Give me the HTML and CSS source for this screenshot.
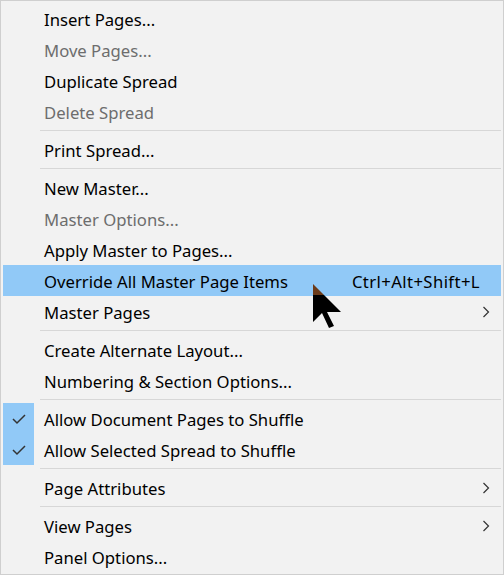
FILE: index.html
```html
<!DOCTYPE html>
<html>
<head>
<meta charset="utf-8">
<link rel="stylesheet" href="styles.css">
</head>
<body>
<div class="menu">
  <div class="item"><span class="check"></span><span class="label">Insert Pages...</span></div>
  <div class="item disabled"><span class="check"></span><span class="label">Move Pages...</span></div>
  <div class="item"><span class="check"></span><span class="label">Duplicate Spread</span></div>
  <div class="item disabled"><span class="check"></span><span class="label">Delete Spread</span></div>
  <div class="sep"></div>
  <div class="item"><span class="check"></span><span class="label">Print Spread...</span></div>
  <div class="sep"></div>
  <div class="item"><span class="check"></span><span class="label">New Master...</span></div>
  <div class="item disabled"><span class="check"></span><span class="label">Master Options...</span></div>
  <div class="item"><span class="check"></span><span class="label">Apply Master to Pages...</span></div>
  <div class="item hover"><span class="check"></span><span class="label">Override All Master Page Items</span><span class="shortcut">Ctrl+Alt+Shift+L</span>
    <svg class="cursor" width="30" height="46" viewBox="0 0 30 46">
      <defs>
        <linearGradient id="cg" x1="0" y1="0" x2="0" y2="46" gradientUnits="userSpaceOnUse">
          <stop offset="0" stop-color="#6b3b1a"/>
          <stop offset="0.25" stop-color="#6b3b1a"/>
          <stop offset="0.25" stop-color="#000"/>
          <stop offset="1" stop-color="#000"/>
        </linearGradient>
      </defs>
      <path d="M0 0 L0 38 L9 29 L16 44 L21 42 L14 28 L28 28 Z" fill="url(#cg)"/>
    </svg>
  </div>
  <div class="item"><span class="check"></span><span class="label">Master Pages</span><span class="arrow"><svg width="8" height="12" viewBox="0 0 8 12"><path d="M1.5 1 L6.5 6 L1.5 11" fill="none" stroke="#333" stroke-width="1.2"/></svg></span></div>
  <div class="sep"></div>
  <div class="item"><span class="check"></span><span class="label">Create Alternate Layout...</span></div>
  <div class="item"><span class="check"></span><span class="label">Numbering &amp; Section Options...</span></div>
  <div class="sep"></div>
  <div class="item checked"><span class="check"><svg width="14" height="12" viewBox="0 0 14 12"><path d="M1 6 L5 10 L13 2" fill="none" stroke="#333" stroke-width="1.5"/></svg></span><span class="label">Allow Document Pages to Shuffle</span></div>
  <div class="item checked"><span class="check"><svg width="14" height="12" viewBox="0 0 14 12"><path d="M1 6 L5 10 L13 2" fill="none" stroke="#333" stroke-width="1.5"/></svg></span><span class="label">Allow Selected Spread to Shuffle</span></div>
  <div class="sep"></div>
  <div class="item"><span class="check"></span><span class="label">Page Attributes</span><span class="arrow"><svg width="8" height="12" viewBox="0 0 8 12"><path d="M1.5 1 L6.5 6 L1.5 11" fill="none" stroke="#333" stroke-width="1.2"/></svg></span></div>
  <div class="sep"></div>
  <div class="item"><span class="check"></span><span class="label">View Pages</span><span class="arrow"><svg width="8" height="12" viewBox="0 0 8 12"><path d="M1.5 1 L6.5 6 L1.5 11" fill="none" stroke="#333" stroke-width="1.2"/></svg></span></div>
  <div class="item"><span class="check"></span><span class="label">Panel Options...</span></div>
</div>
</body>
</html>
```
FILE: styles.css
```css
html, body {
  margin: 0;
  padding: 0;
  background: #f2f2f2;
}
.menu {
  box-sizing: border-box;
  width: 504px;
  height: 575px;
  border: 1px solid #cfcfcf;
  background: #f2f2f2;
  padding: 2px 2px;
  font-family: "Noto Sans", "Open Sans", sans-serif;
  font-size: 16.7px;
  color: #000;
}
.item {
  position: relative;
  display: flex;
  align-items: center;
  height: 31px;
  line-height: 31px;
  white-space: nowrap;
}
.item.disabled {
  color: #6d6d6d;
}
.item.hover {
  background: #91c9f7;
}
.check {
  width: 31px;
  height: 31px;
  flex: none;
  display: flex;
  align-items: center;
  justify-content: center;
  margin-right: 10px;
}
.checked .check {
  background: #91c9f7;
}
.check svg {
  display: block;
}
.label {
  flex: 1;
  padding-top: 1px;
}
.shortcut {
  padding-top: 1px;
  margin-right: 21px;
  letter-spacing: 0.4px;
}
.arrow {
  width: 8px;
  height: 12px;
  margin-right: 11px;
  display: flex;
}
.sep {
  height: 1px;
  margin: 3px 0 3px 37px;
  background: #d7d7d7;
}
.cursor {
  position: absolute;
  left: 310px;
  top: 19px;
  z-index: 2;
}
```
